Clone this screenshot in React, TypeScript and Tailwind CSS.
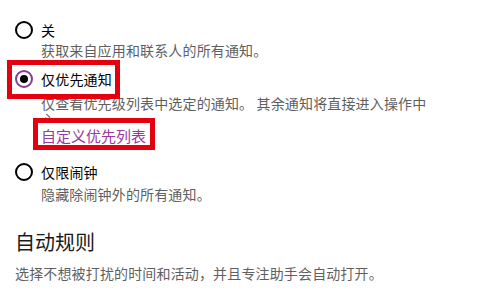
import React from "react";

function Radio({ checked }: { checked?: boolean }) {
  if (checked) {
    return (
      <div className="w-[18px] h-[18px] rounded-full border-2 border-[#8a3a92] flex items-center justify-center shrink-0">
        <div className="w-[8px] h-[8px] rounded-full bg-black" />
      </div>
    );
  }
  return <div className="w-[18px] h-[18px] rounded-full border-2 border-black shrink-0" />;
}

export default function App() {
  return (
    <div
      className="w-[500px] h-[295px] bg-white overflow-hidden pl-[15px] pt-[20px] text-[14px]"
      style={{ fontFamily: '"Microsoft YaHei", "Noto Sans CJK SC", sans-serif' }}
    >
      <div className="flex items-center gap-[8px] h-[20px]">
        <Radio />
        <span className="text-black leading-[20px] tracking-[0.2px]">关</span>
      </div>
      <div className="ml-[26px] leading-[20px] text-[#5f5f5f] tracking-[0.15px]">获取来自应用和联系人的所有通知。</div>

      <div className="relative flex items-center gap-[8px] h-[20px] mt-[9px]">
        <div className="absolute left-[-8px] top-[-9px] w-[113px] h-[39px] border-[5px] border-[#e4000f]" />
        <div className="relative">
          <Radio checked />
        </div>
        <span className="relative text-black leading-[20px] tracking-[0.2px]">仅优先通知</span>
      </div>
      <div className="ml-[26px] mt-[6px] w-[392px] leading-[16px] text-[#5f5f5f] tracking-[0.15px]">
        仅查看优先级列表中选定的通知。 其余通知将直接进入操作中心
      </div>
      <div className="relative ml-[26px] -mt-[1px] w-fit">
        <div className="absolute left-[-8px] top-[-8px] w-[122px] h-[32px] border-[5px] border-[#e4000f] bg-white" />
        <span className="relative block leading-[20px] text-[15px] text-[#9a3a9f]">自定义优先列表</span>
      </div>

      <div className="flex items-center gap-[8px] h-[20px] mt-[16px]">
        <Radio />
        <span className="text-black leading-[20px] tracking-[0.2px]">仅限闹钟</span>
      </div>
      <div className="ml-[26px] mt-[2px] leading-[20px] text-[#5f5f5f] tracking-[0.15px]">隐藏除闹钟外的所有通知。</div>

      <div className="mt-[24px] text-[20px] leading-[28px] text-[#1a1a1a]">自动规则</div>
      <div className="mt-[7px] leading-[20px] text-[#5f5f5f] tracking-[0.15px]">选择不想被打扰的时间和活动，并且专注助手会自动打开。</div>
    </div>
  );
}
